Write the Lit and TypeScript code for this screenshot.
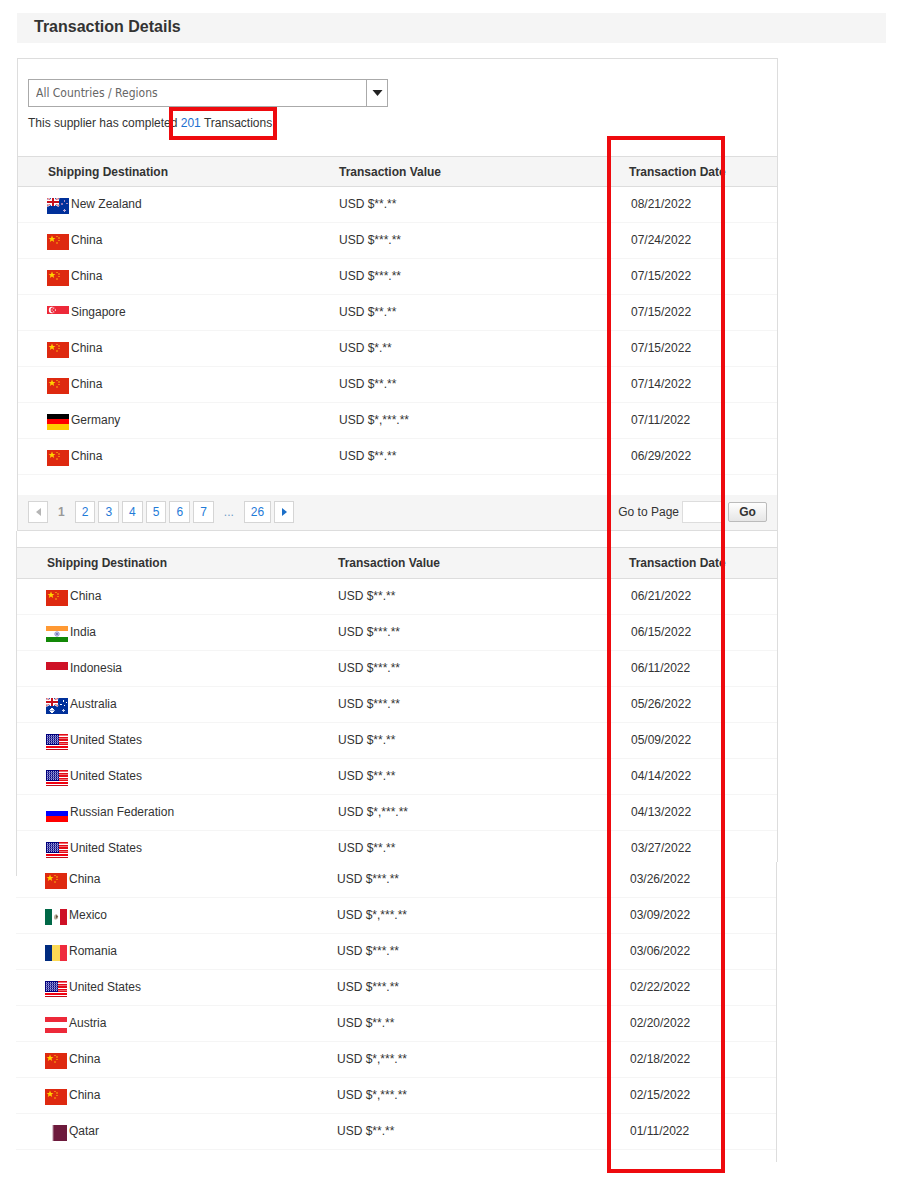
import { LitElement, html, css, svg } from "lit";
import { customElement, property } from "lit/decorators.js";

type Row = [flag: string, country: string, value: string, date: string];

const first: Row[] = [
  ["nz", "New Zealand", "USD $**.**", "08/21/2022"],
  ["cn", "China", "USD $***.**", "07/24/2022"],
  ["cn", "China", "USD $***.**", "07/15/2022"],
  ["sg", "Singapore", "USD $**.**", "07/15/2022"],
  ["cn", "China", "USD $*.**", "07/15/2022"],
  ["cn", "China", "USD $**.**", "07/14/2022"],
  ["de", "Germany", "USD $*,***.**", "07/11/2022"],
  ["cn", "China", "USD $**.**", "06/29/2022"],
];
const second: Row[] = [
  ["cn", "China", "USD $**.**", "06/21/2022"],
  ["in", "India", "USD $***.**", "06/15/2022"],
  ["id", "Indonesia", "USD $***.**", "06/11/2022"],
  ["au", "Australia", "USD $***.**", "05/26/2022"],
  ["us", "United States", "USD $**.**", "05/09/2022"],
  ["us", "United States", "USD $**.**", "04/14/2022"],
  ["ru", "Russian Federation", "USD $*,***.**", "04/13/2022"],
  ["us", "United States", "USD $**.**", "03/27/2022"],
];
const third: Row[] = [
  ["cn", "China", "USD $***.**", "03/26/2022"],
  ["mx", "Mexico", "USD $*,***.**", "03/09/2022"],
  ["ro", "Romania", "USD $***.**", "03/06/2022"],
  ["us", "United States", "USD $***.**", "02/22/2022"],
  ["at", "Austria", "USD $**.**", "02/20/2022"],
  ["cn", "China", "USD $*,***.**", "02/18/2022"],
  ["cn", "China", "USD $*,***.**", "02/15/2022"],
  ["qa", "Qatar", "USD $**.**", "01/11/2022"],
];

const rect = (x: number, y: number, w: number, h: number, fill: string) =>
  svg`<rect x=${x} y=${y} width=${w} height=${h} fill=${fill}></rect>`;

const unionJack = svg`
  ${rect(0, 0, 12, 8, "#2a4ba6")}
  <path d="M0 0L12 8M12 0L0 8" stroke="#fff" stroke-width="2.2"></path>
  <path d="M0 0L12 8M12 0L0 8" stroke="#d8232f" stroke-width="0.8"></path>
  <path d="M6 0V8M0 4H12" stroke="#fff" stroke-width="4"></path>
  <path d="M6 0V8M0 4H12" stroke="#c8101c" stroke-width="2"></path>`;

const usCanton = Array.from({ length: 9 }, (_, r) =>
  Array.from({ length: 6 }, (_, c) => rect(1 + c * 2 + (r % 2 ? 0.5 : 0), 1 + r, 1, 1, "#a5a5e0"))
);

const flags: Record<string, unknown> = {
  cn: svg`${rect(0, 0, 22, 16, "#de2910")}
    <path d="M5 1.6L6 4H8.4L6.5 5.6L7.2 8L5 6.6L2.8 8L3.5 5.6L1.6 4H4Z" fill="#ffd200"></path>
    ${rect(9, 2, 2, 1, "#f0800c")}${rect(11, 3, 2, 2, "#ee6a0e")}
    ${rect(11, 6, 2, 1, "#f0800c")}${rect(9, 8, 2, 2, "#ee6a0e")}`,
  nz: svg`${rect(0, 0, 22, 16, "#00309a")}${unionJack}
    ${rect(17, 2, 1, 2, "#a98ac0")}${rect(14, 5, 2, 2, "#8f74b4")}
    ${rect(19, 5, 2, 1, "#a98ac0")}${rect(17, 11, 1, 3, "#b9a8d6")}${rect(16, 12, 3, 1, "#b9a8d6")}`,
  au: svg`${rect(0, 0, 22, 16, "#00309a")}${unionJack}
    ${rect(5, 10, 2, 5, "#fff")}${rect(4, 11, 4, 3, "#fff")}${rect(3, 12, 6, 1, "#9fb0da")}
    ${rect(17, 2, 1, 2, "#fff")}${rect(14, 6, 2, 1, "#fff")}${rect(20, 4, 1, 1, "#fff")}
    ${rect(18, 7, 1, 1, "#fff")}${rect(17, 11, 1, 3, "#c9d3ee")}${rect(16, 12, 3, 1, "#c9d3ee")}`,
  sg: svg`${rect(0, 0, 22, 8, "#ed2939")}
    <circle cx="5" cy="4" r="3.2" fill="#fff"></circle><circle cx="6.4" cy="4" r="2.8" fill="#ed2939"></circle>
    <circle cx="6.8" cy="4" r="1.7" fill="none" stroke="#fff" stroke-width="0.9" stroke-dasharray="1 1.1"></circle>`,
  de: [rect(0, 0, 22, 5, "#000"), rect(0, 5, 22, 5, "#f00"), rect(0, 10, 22, 6, "#fc0")],
  in: svg`${rect(0, 0, 22, 5, "#f93")}${rect(0, 11, 22, 5, "#128807")}
    <circle cx="11" cy="8" r="2.2" fill="#d5d5ec" stroke="#8c8cc8" stroke-width="0.9"></circle>
    <circle cx="11" cy="8" r="0.9" fill="#5555a5"></circle>`,
  id: rect(0, 0, 22, 8, "#ce1126"),
  us: [
    rect(0, 0, 22, 16, "#fff"),
    ...[0, 3, 5, 8].map((y) => rect(0, y, 22, y === 5 ? 2 : 1.6, "#e30a17")),
    rect(0, 10, 22, 1, "#e30a17"),
    rect(0, 12, 22, 2, "#f00010"),
    rect(0, 15, 22, 1, "#c40a17"),
    rect(0, 0, 13, 11, "#00007c"),
    usCanton,
  ],
  ru: [rect(0, 5, 22, 6, "#00f"), rect(0, 10, 22, 6, "#f00")],
  mx: svg`${rect(0, 0, 7, 16, "#006847")}${rect(15, 0, 7, 16, "#ce1126")}
    <path d="M9 8.5Q9.3 5 12 5.4Q14 7 12.8 9.2Q11.4 11.4 9.4 10.2Z" fill="#b5ab98"></path>
    <path d="M11 6L13 7.6L11.2 9.6Z" fill="#5f4a38"></path>`,
  ro: [rect(0, 0, 7, 16, "#002b7f"), rect(7, 0, 8, 16, "#fcd955"), rect(15, 0, 7, 16, "#ef2b3c")],
  at: [rect(0, 0, 22, 5, "#ed2939"), rect(0, 11, 22, 5, "#ed2939")],
  qa: svg`<path d="M22 0H7L9 1L7 2L9 3L7 4L9 5L7 6L9 7L7 8L9 9L7 10L9 11L7 12L9 13L7 14L9 15L7 16H22Z" fill="#6d1a3c"></path>`,
};

@customElement("country-flag")
class CountryFlag extends LitElement {
  @property() code = "";
  static styles = css`
    :host { display: block; flex: none; }
    svg { display: block; }
  `;
  render() {
    return html`<svg width="22" height="16" viewBox="0 0 22 16" aria-hidden="true">${flags[this.code]}</svg>`;
  }
}

@customElement("app-root")
class AppRoot extends LitElement {
  static styles = css`
    :host {
      display: block;
      background: #fff;
      color: #333;
      font: 12px/16px "Liberation Sans", Arial, sans-serif;
    }
    * { box-sizing: border-box; }
    .page { padding: 13px 14px 20px 15px; }
    .title {
      margin: 0 0 15px 2px;
      padding: 0 17px 2px;
      background: #f5f5f5;
      font-size: 16px;
      line-height: 28px;
    }
    .report { position: relative; max-width: 763px; }
    .panel { border: 1px solid #ddd; }
    .panel-main { margin-left: 2px; }
    .panel-next { margin: 0 0 0 1px; padding-top: 16px; border-width: 0 1px; }
    .panel-last {
      position: relative;
      margin-right: 1px;
      padding: 0 0 12px 1px;
      border-width: 0 1px 0 0;
    }
    .panel-last::before {
      content: "";
      position: absolute;
      left: 1px;
      top: 0;
      height: 14px;
      border-left: 1px solid #ddd;
    }
    .filter { padding: 20px 10px 25px; }
    .picker { position: relative; max-width: 360px; margin-bottom: 8px; }
    .picker select {
      display: block;
      width: 100%;
      height: 28px;
      padding: 0 32px 0 7px;
      border: 1px solid #aaa;
      border-radius: 0;
      background: #fff;
      color: #666;
      font: 12px "DejaVu Sans Condensed", "Noto Sans", sans-serif;
      appearance: none;
    }
    .picker .arrow {
      position: absolute;
      top: 1px;
      right: 1px;
      bottom: 1px;
      width: 21px;
      display: grid;
      place-items: center;
      border-left: 1px solid #aaa;
      pointer-events: none;
    }
    .summary { margin: 0; }
    .summary a { color: #1b6fd0; text-decoration: none; }
    .marked { position: relative; }
    .marked::after {
      content: "";
      position: absolute;
      inset: -9px -2px -10px -12px;
      border: 4px solid #ee0a0e;
    }
    .column-mark {
      position: absolute;
      top: 78px;
      bottom: -11px;
      right: 53px;
      width: 118px;
      border: 4px solid #ee0a0e;
      pointer-events: none;
    }
    table { width: 100%; border-collapse: separate; border-spacing: 0; table-layout: fixed; }
    .c1 { width: 321px; }
    .c3 { width: 148px; }
    th {
      height: 31px;
      padding: 0;
      border: solid #ddd;
      border-width: 1px 0;
      background: #f5f5f5;
      text-align: left;
    }
    .panel-next th { height: 32px; }
    th:first-child { padding-left: 30px; }
    td { height: 36px; padding: 9px 0 0; border-bottom: 1px solid #f5f5f5; vertical-align: top; }
    td:last-child { padding-left: 2px; }
    .country { display: flex; gap: 2px; height: 16px; padding-left: 29px; }
    .country country-flag { margin-top: 2px; }
    .panel-next tr:last-child td { height: 31px; border-bottom: 0; }
    .pager {
      display: flex;
      align-items: center;
      justify-content: space-between;
      margin-top: 20px;
      height: 35px;
      padding: 0 10px 1px;
      background: #f5f5f5;
    }
    .pages { display: flex; gap: 3px; }
    .pages a, .pages span, .pages button {
      height: 22px;
      padding: 0 6px;
      border: 1px solid #d5d5d5;
      background: #fff;
      color: #1f7bd8;
      line-height: 20px;
      text-decoration: none;
    }
    .pages button { width: 20px; display: grid; place-items: center; border-radius: 0; }
    .pages .current, .pages .dots { border-color: transparent; background: none; color: #999; }
    .pages .current { font-weight: bold; }
    .pages .dots { color: #6f9cc8; }
    .jump { display: flex; align-items: center; }
    .jump input {
      width: 42px;
      height: 22px;
      margin: 0 4px 0 3px;
      border: 1px solid #ddd;
      border-radius: 0;
      background: #fff;
      font: inherit;
    }
    .jump button {
      width: 39px;
      height: 20px;
      padding: 0;
      border: 1px solid #bbb;
      border-radius: 2px;
      background: linear-gradient(#fefefe, #e6e6e6);
      color: #333;
      font: bold 12px/18px "Liberation Sans", Arial, sans-serif;
    }
  `;

  table(rows: Row[], heading: boolean) {
    return html`<table aria-label="Transactions">
      <colgroup><col class="c1" /><col /><col class="c3" /></colgroup>
      ${heading
        ? html`<thead><tr>
            <th scope="col">Shipping Destination</th>
            <th scope="col">Transaction Value</th>
            <th scope="col">Transaction Date</th>
          </tr></thead>`
        : ""}
      <tbody>
        ${rows.map(([flag, country, value, date]) => html`<tr>
          <td><div class="country"><country-flag code=${flag}></country-flag>${country}</div></td>
          <td>${value}</td>
          <td>${date}</td>
        </tr>`)}
      </tbody>
    </table>`;
  }

  render() {
    return html`<main class="page">
      <h1 class="title">Transaction Details</h1>
      <div class="report">
        <section class="panel panel-main">
          <div class="filter">
            <div class="picker">
              <select aria-label="Country or region"><option>All Countries / Regions</option></select>
              <span class="arrow"><svg width="11" height="6" viewBox="0 0 11 6"><path d="M0.5 0H10.5L5.5 6Z" fill="#222"></path></svg></span>
            </div>
            <p class="summary">This supplier has completed <span class="marked"><a href="#transactions">201</a> Transactions.</span></p>
          </div>
          ${this.table(first, true)}
          <div class="pager">
            <nav class="pages" aria-label="Pages">
              <button disabled aria-label="Previous page"><svg width="5" height="8" viewBox="0 0 5 8"><path d="M5 0V8L0 4Z" fill="#b5b5b5"></path></svg></button>
              <span class="current">1</span>
              ${[2, 3, 4, 5, 6, 7].map((n) => html`<a href="#page-${n}">${n}</a>`)}
              <span class="dots">...</span>
              <a href="#page-26">26</a>
              <button aria-label="Next page"><svg width="5" height="8" viewBox="0 0 5 8"><path d="M0 0V8L5 4Z" fill="#1b6fc8"></path></svg></button>
            </nav>
            <form class="jump" @submit=${(e: Event) => e.preventDefault()}>
              <label for="goto">Go to Page</label>
              <input id="goto" type="text" />
              <button>Go</button>
            </form>
          </div>
        </section>
        <section class="panel panel-next">${this.table(second, true)}</section>
        <section class="panel panel-last">${this.table(third, false)}</section>
        <div class="column-mark"></div>
      </div>
    </main>`;
  }
}
